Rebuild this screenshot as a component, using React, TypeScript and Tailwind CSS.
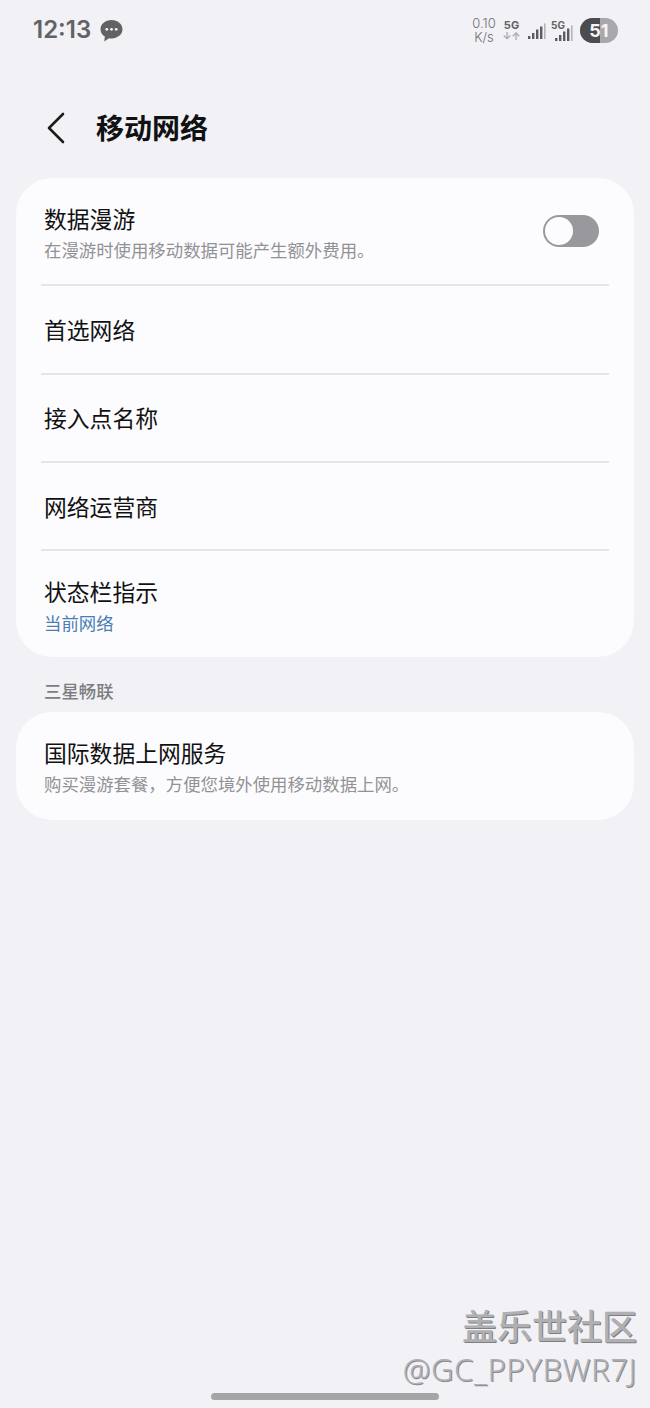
const cjk = "font-['Noto_Sans_CJK_SC','Noto_Sans',sans-serif]";

function Divider() {
  return <div className="mx-[25px] h-[2px] bg-[#e4e4e9]" />;
}

function Bars() {
  return (
    <svg width="18" height="17" viewBox="0 0 18 17">
      <rect x="0" y="13" width="2.4" height="3" fill="#5c5c60" />
      <rect x="4" y="10" width="2.4" height="6" fill="#5c5c60" />
      <rect x="8" y="6.5" width="2.4" height="9.5" fill="#5c5c60" />
      <rect x="12" y="3.5" width="2.4" height="12.5" fill="#5c5c60" />
      <rect x="16" y="0.5" width="1.6" height="15.5" fill="#b4b4b8" />
    </svg>
  );
}

function StatusBar() {
  return (
    <div className="flex h-[60px] items-start justify-between pl-[33px] pr-[32px] pt-[15px]">
      <div className="flex items-center gap-[9px]">
        <span className="font-['Inter',sans-serif] text-[24px] leading-[30px] font-semibold text-[#626265]">12:13</span>
        <svg width="23" height="23" viewBox="0 0 23 23">
          <path d="M11.5 1C17.6 1 22.5 5 22.5 10.3C22.5 15.6 17.6 19.4 11.5 19.4C10.6 19.4 9.8 19.3 9 19.2L4.3 22.5L4.8 17.6C2.2 16 .5 13.4 .5 10.3C.5 5 5.4 1 11.5 1Z" fill="#626265" />
          <circle cx="6.8" cy="10.3" r="1.4" fill="#f1f1f6" />
          <circle cx="11.5" cy="10.3" r="1.4" fill="#f1f1f6" />
          <circle cx="16.2" cy="10.3" r="1.4" fill="#f1f1f6" />
        </svg>
      </div>
      <div className="flex items-center pt-[1px]">
        <div className="flex w-[24px] flex-col items-center font-['Inter',sans-serif] text-[13px] leading-[14px] font-light text-[#6f6f73]">
          <span>0.10</span>
          <span>K/s</span>
        </div>
        <div className="ml-[8px] flex w-[15px] flex-col items-center font-['Inter',sans-serif]">
          <span className="text-[11px] leading-[12px] font-bold text-[#626265]">5G</span>
          <span className="text-[10px] leading-[10px] font-bold text-[#a9a9ad]">↓↑</span>
        </div>
        <div className="ml-[9px] mt-[3px]"><Bars /></div>
        <div className="relative ml-[9px] h-[24px] w-[18px]">
          <span className="absolute top-[2px] -left-[4px] font-['Inter',sans-serif] text-[10px] leading-[11px] font-bold text-[#626265]">5G</span>
          <div className="absolute right-0 bottom-[0px]"><Bars /></div>
        </div>
        <div className="relative ml-[7px] flex h-[25px] w-[38px] overflow-hidden rounded-full bg-[#a8a8ac]">
          <div className="h-full w-[20px] bg-[#4c4c4f]" />
          <span className="absolute inset-0 text-center font-['Inter',sans-serif] text-[18px] leading-[25px] font-bold text-[#f5f5f7]">51</span>
        </div>
      </div>
    </div>
  );
}

function Row({ title, sub, subClass }: { title: string; sub?: string; subClass?: string }) {
  return (
    <div>
      <div className="text-[22.8px] leading-[30px] text-[#111113]">{title}</div>
      {sub && <div className={`mt-[4px] text-[17.4px] leading-[24px] ${subClass ?? "text-[#929296]"}`}>{sub}</div>}
    </div>
  );
}

export default function App() {
  return (
    <div className={`relative h-[1408px] w-[650px] overflow-hidden bg-[#f1f1f6] ${cjk}`}>
      <StatusBar />

      <div className="flex h-[118px] items-start pt-[46px] pl-[46px]">
        <svg width="20" height="32" viewBox="0 0 20 32" fill="none" className="mt-[6px]">
          <path d="M17 2L3 16L17 30" stroke="#1c1c1e" strokeWidth="2.6" strokeLinecap="round" strokeLinejoin="round" />
        </svg>
        <h1 className="ml-[30px] text-[28px] leading-[42px] font-semibold text-[#111113]">移动网络</h1>
      </div>

      <div className="mx-4 rounded-[36px] bg-[#fcfcfe]">
        <div className="flex h-[106px] items-start justify-between pt-[26px] pl-[28px] pr-[35px]">
          <Row title="数据漫游" sub="在漫游时使用移动数据可能产生额外费用。" />
          <div className="mt-[11px] flex h-[32px] w-[56px] items-center rounded-full bg-[#99999d] pl-[2px]">
            <div className="h-[28px] w-[28px] rounded-full bg-[#fcfcfe]" />
          </div>
        </div>
        <Divider />
        <div className="flex h-[87px] items-center pl-[28px]"><Row title="首选网络" /></div>
        <Divider />
        <div className="flex h-[86px] items-center pl-[28px]"><Row title="接入点名称" /></div>
        <Divider />
        <div className="flex h-[86px] items-center pt-[2px] pl-[28px]"><Row title="网络运营商" /></div>
        <Divider />
        <div className="h-[106px] pt-[26px] pl-[28px]">
          <Row title="状态栏指示" sub="当前网络" subClass="text-[#4b7db3]" />
        </div>
      </div>

      <div className="h-[55px] pt-[22px] pl-[44px] text-[17.4px] leading-[24px] font-medium text-[#7d7d81]">三星畅联</div>

      <div className="mx-4 flex h-[108px] flex-col justify-center rounded-[36px] bg-[#fcfcfe] pt-[2px] pl-[28px]">
        <Row title="国际数据上网服务" sub="购买漫游套餐，方便您境外使用移动数据上网。" />
      </div>

      {/* watermark */}
      <div className="absolute top-[1302px] right-[13px] flex flex-col items-end text-[#b0b0b3]">
        <span className="text-[35px] leading-[46px] font-medium [text-shadow:1px_1px_0_#7f7f82]">盖乐世社区</span>
        <span className="font-['Noto_Sans',sans-serif] text-[31px] leading-[42px] font-light tracking-[0.6px] [text-shadow:1px_1px_0_#8a8a8d]">@GC_PPYBWR7J</span>
      </div>

      {/* home bar */}
      <div className="absolute bottom-[8px] left-[211px] h-[7px] w-[228px] rounded-full bg-[#a5a5a8]" />
    </div>
  );
}
